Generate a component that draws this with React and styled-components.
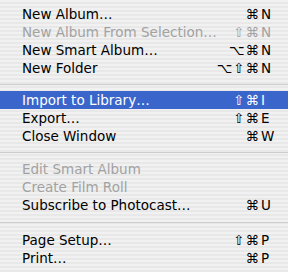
import React from 'react'
import styled, { createGlobalStyle } from 'styled-components'

const GlobalStyle = createGlobalStyle`
  html, body {
    margin: 0;
    padding: 0;
    width: 288px;
    height: 272px;
    overflow: hidden;
  }
`

const sections = [
  {
    gap: 0,
    items: [
      { label: 'New Album…', mods: '⌘', key: 'N' },
      { label: 'New Album From Selection…', mods: '⇧⌘', key: 'N', disabled: true },
      { label: 'New Smart Album…', mods: '⌥⌘', key: 'N' },
      { label: 'New Folder', mods: '⌥⇧⌘', key: 'N' }
    ]
  },
  {
    gap: 14,
    items: [
      { label: 'Import to Library…', mods: '⇧⌘', key: 'I', active: true },
      { label: 'Export…', mods: '⇧⌘', key: 'E' },
      { label: 'Close Window', mods: '⌘', key: 'W' }
    ]
  },
  {
    gap: 15,
    items: [
      { label: 'Edit Smart Album', disabled: true },
      { label: 'Create Film Roll', disabled: true },
      { label: 'Subscribe to Photocast…', mods: '⌘', key: 'U' }
    ]
  },
  {
    gap: 17,
    items: [
      { label: 'Page Setup…', mods: '⇧⌘', key: 'P' },
      { label: 'Print…', mods: '⌘', key: 'P' }
    ]
  }
]

const App = () => {
  return (
    <>
      <GlobalStyle />
      <Menu>
        {sections.map((section, i) => (
          <React.Fragment key={i}>
            {i > 0 && <Separator $height={section.gap} />}
            {section.items.map(item => (
              <Item key={item.label} $disabled={item.disabled} $active={item.active}>
                <Label>{item.label}</Label>
                {item.key && (
                  <Shortcut>
                    <Mods>{item.mods}</Mods>
                    <Key>{item.key}</Key>
                  </Shortcut>
                )}
              </Item>
            ))}
          </React.Fragment>
        ))}
      </Menu>
    </>
  )
}

const Menu = styled.div`
  width: 288px;
  height: 272px;
  box-sizing: border-box;
  padding-top: 5px;
  display: flex;
  flex-direction: column;
  background: repeating-linear-gradient(
    to bottom,
    #f1f1f1 0px,
    #f1f1f1 2px,
    #e8e8e8 2px,
    #e8e8e8 4px
  );
  font-family: 'DejaVu Sans', 'Liberation Sans', sans-serif;
  font-size: 13.5px;
`

const Item = styled.div`
  display: flex;
  align-items: center;
  flex-shrink: 0;
  height: 18px;
  line-height: 18px;
  padding: 0 11px 0 22px;
  color: ${p => (p.$active ? '#ffffff' : p.$disabled ? '#a2a2a2' : '#000000')};
  background: ${p => (p.$active ? '#3a66cb' : 'transparent')};
  white-space: nowrap;
`

const Label = styled.span`
  flex: 1;
`

const Shortcut = styled.span`
  display: flex;
`

const Mods = styled.span`
  text-align: right;
  letter-spacing: 1px;
`

const Key = styled.span`
  width: 16px;
  padding-left: 1px;
`

const Separator = styled.div`
  height: ${p => p.$height}px;
  flex-shrink: 0;
  display: flex;
  align-items: center;
  &::before {
    content: '';
    flex: 1;
    height: 1px;
    background: #cdcdcd;
  }
`

export default App
